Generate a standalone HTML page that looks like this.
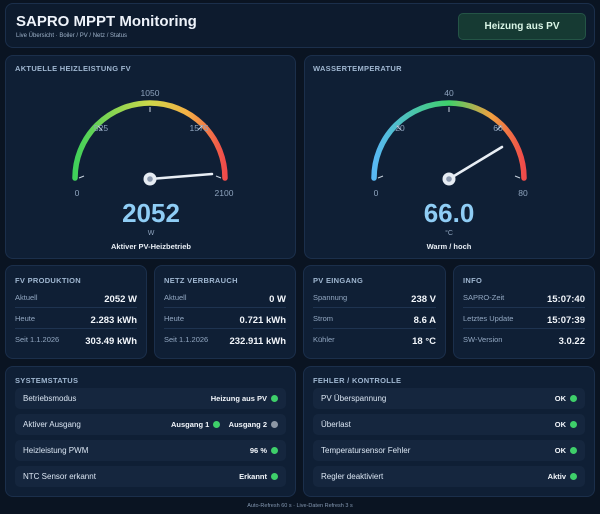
<!DOCTYPE html>
<html><head><meta charset="utf-8"><style>
*{box-sizing:border-box;margin:0;padding:0}
body{width:600px;height:514px;background:#0a1422;font-family:"Liberation Sans",sans-serif;color:#dbe6f3;position:relative;overflow:hidden}
.card{position:absolute;background:#0f1f35;border:1px solid #1b2f4b;border-radius:8px}
.t{position:absolute;font-size:7.5px;font-weight:bold;color:#9fb6d0;letter-spacing:.3px}
.row{position:absolute;left:9px;right:9px;height:21px;font-size:7.5px;color:#93a8c2}
.row .v{position:absolute;right:0;top:0;font-size:9.5px;font-weight:bold;color:#f2f6fb}
.sep{position:absolute;left:9px;right:9px;height:1px;background:#1e3350}
.srow{position:absolute;left:9px;right:9px;height:21px;background:#15263e;border-radius:5px;font-size:8px;color:#dbe6f3}
.srow span.l{position:absolute;left:8px;top:6px}
.srow .r{position:absolute;right:8px;top:6px;font-weight:bold;font-size:7.5px;color:#f2f6fb}
.dot{display:inline-block;width:7px;height:7px;border-radius:50%;background:#3ecf6a;vertical-align:-1px;margin-left:4px}
.g{background:#8d97a5}
</style></head><body>
<div class="card" style="left:5px;top:3px;width:590px;height:45px;background:#0d1b2e">
<div style="position:absolute;left:10px;top:9px;font-size:15px;font-weight:bold;color:#eef3fa">SAPRO MPPT Monitoring</div>
<div style="position:absolute;left:10px;top:29px;font-size:6px;color:#9fb3ca">Live Übersicht · Boiler / PV / Netz / Status</div>
<div style="position:absolute;left:452px;top:9px;width:128px;height:27px;background:#163a33;border:1px solid #245446;border-radius:5px;text-align:center;line-height:26px;font-size:10px;font-weight:bold;color:#d9f5e6">Heizung aus PV</div>
</div>

<div class="card" style="left:5px;top:55px;width:291px;height:204px"><div class="t" style="left:9px;top:8px">AKTUELLE HEIZLEISTUNG FV</div></div>
<div class="card" style="left:304px;top:55px;width:291px;height:204px"><div class="t" style="left:8px;top:8px">WASSERTEMPERATUR</div></div>

<svg style="position:absolute;left:0;top:0" width="600" height="260">
<defs>
<linearGradient id="ga" x1="75" y1="0" x2="225" y2="0" gradientUnits="userSpaceOnUse"><stop offset="0" stop-color="#3fd15a"/><stop offset=".5" stop-color="#cfd84a"/><stop offset=".75" stop-color="#f5b045"/><stop offset="1" stop-color="#f04a4a"/></linearGradient>
<linearGradient id="gb" x1="374" y1="0" x2="524" y2="0" gradientUnits="userSpaceOnUse"><stop offset="0" stop-color="#58b8f5"/><stop offset=".5" stop-color="#3fd06a"/><stop offset=".78" stop-color="#f0a040"/><stop offset="1" stop-color="#f04a4a"/></linearGradient>
</defs>
<g font-size="8.5" fill="#8ea3bd" text-anchor="middle" font-family="Liberation Sans">
<path d="M75 178 A75 75 0 0 1 225 178" fill="none" stroke="url(#ga)" stroke-width="5.5" stroke-linecap="round"/>
<g stroke="#c8d2de" stroke-width="1"><line x1="150" y1="107" x2="150" y2="112"/><line x1="98" y1="126" x2="102" y2="130"/><line x1="202" y1="126" x2="198" y2="130"/><line x1="79" y1="178" x2="84" y2="176"/><line x1="221" y1="178" x2="216" y2="176"/></g>
<text x="150" y="96">1050</text><text x="101" y="131">525</text><text x="199" y="131">1575</text><text x="77" y="196">0</text><text x="224" y="196">2100</text>
<line x1="150" y1="179" x2="212" y2="174" stroke="#e8eef5" stroke-width="2.5" stroke-linecap="round"/>
<circle cx="150" cy="179" r="6.5" fill="#e6ecf3"/><circle cx="150" cy="179" r="2.8" fill="#8d9ab0"/>
<path d="M374 178 A75 75 0 0 1 524 178" fill="none" stroke="url(#gb)" stroke-width="5.5" stroke-linecap="round"/>
<g stroke="#c8d2de" stroke-width="1"><line x1="449" y1="107" x2="449" y2="112"/><line x1="397" y1="126" x2="401" y2="130"/><line x1="501" y1="126" x2="497" y2="130"/><line x1="378" y1="178" x2="383" y2="176"/><line x1="520" y1="178" x2="515" y2="176"/></g>
<text x="449" y="96">40</text><text x="400" y="131">20</text><text x="498" y="131">60</text><text x="376" y="196">0</text><text x="523" y="196">80</text>
<line x1="449" y1="179" x2="502" y2="147" stroke="#e8eef5" stroke-width="2.5" stroke-linecap="round"/>
<circle cx="449" cy="179" r="6.5" fill="#e6ecf3"/><circle cx="449" cy="179" r="2.8" fill="#8d9ab0"/>
</g>
<g text-anchor="middle" font-family="Liberation Sans">
<text x="151" y="222" font-size="26" font-weight="bold" fill="#8fcdf5">2052</text>
<text x="151" y="235" font-size="7" fill="#8ea3bd">W</text>
<text x="151" y="249" font-size="7.5" font-weight="bold" fill="#e8eef5">Aktiver PV-Heizbetrieb</text>
<text x="449" y="222" font-size="26" font-weight="bold" fill="#8fcdf5">66.0</text>
<text x="449" y="235" font-size="7" fill="#8ea3bd">°C</text>
<text x="449" y="249" font-size="7.5" font-weight="bold" fill="#e8eef5">Warm / hoch</text>
</g>
</svg>

<div class="card" style="left:5px;top:265px;width:142px;height:94px"><div class="t" style="left:9px;top:10px">FV PRODUKTION</div>
<div class="row" style="top:27px">Aktuell<span class="v" style="top:1px">2052 W</span></div><div class="sep" style="top:41px"></div>
<div class="row" style="top:48px">Heute<span class="v" style="top:1px">2.283 kWh</span></div><div class="sep" style="top:62px"></div>
<div class="row" style="top:69px">Seit 1.1.2026<span class="v" style="top:1px">303.49 kWh</span></div></div>
<div class="card" style="left:154px;top:265px;width:142px;height:94px"><div class="t" style="left:9px;top:10px">NETZ VERBRAUCH</div>
<div class="row" style="top:27px">Aktuell<span class="v" style="top:1px">0 W</span></div><div class="sep" style="top:41px"></div>
<div class="row" style="top:48px">Heute<span class="v" style="top:1px">0.721 kWh</span></div><div class="sep" style="top:62px"></div>
<div class="row" style="top:69px">Seit 1.1.2026<span class="v" style="top:1px">232.911 kWh</span></div></div>
<div class="card" style="left:303px;top:265px;width:143px;height:94px"><div class="t" style="left:9px;top:10px">PV EINGANG</div>
<div class="row" style="top:27px">Spannung<span class="v" style="top:1px">238 V</span></div><div class="sep" style="top:41px"></div>
<div class="row" style="top:48px">Strom<span class="v" style="top:1px">8.6 A</span></div><div class="sep" style="top:62px"></div>
<div class="row" style="top:69px">Kühler<span class="v" style="top:1px">18 °C</span></div></div>
<div class="card" style="left:453px;top:265px;width:142px;height:94px"><div class="t" style="left:9px;top:10px">INFO</div>
<div class="row" style="top:27px">SAPRO-Zeit<span class="v" style="top:1px">15:07:40</span></div><div class="sep" style="top:41px"></div>
<div class="row" style="top:48px">Letztes Update<span class="v" style="top:1px">15:07:39</span></div><div class="sep" style="top:62px"></div>
<div class="row" style="top:69px">SW-Version<span class="v" style="top:1px">3.0.22</span></div></div>

<div class="card" style="left:5px;top:366px;width:291px;height:131px"><div class="t" style="left:9px;top:9px">SYSTEMSTATUS</div>
<div class="srow" style="top:21px"><span class="l">Betriebsmodus</span><span class="r">Heizung aus PV<i class="dot"></i></span></div>
<div class="srow" style="top:47px"><span class="l">Aktiver Ausgang</span><span class="r">Ausgang 1<i class="dot"></i>&nbsp;&nbsp;&nbsp;&nbsp;Ausgang 2<i class="dot g"></i></span></div>
<div class="srow" style="top:73px"><span class="l">Heizleistung PWM</span><span class="r">96 %<i class="dot"></i></span></div>
<div class="srow" style="top:99px"><span class="l">NTC Sensor erkannt</span><span class="r">Erkannt<i class="dot"></i></span></div></div>
<div class="card" style="left:303px;top:366px;width:292px;height:131px"><div class="t" style="left:9px;top:9px">FEHLER / KONTROLLE</div>
<div class="srow" style="top:21px"><span class="l">PV Überspannung</span><span class="r">OK<i class="dot"></i></span></div>
<div class="srow" style="top:47px"><span class="l">Überlast</span><span class="r">OK<i class="dot"></i></span></div>
<div class="srow" style="top:73px"><span class="l">Temperatursensor Fehler</span><span class="r">OK<i class="dot"></i></span></div>
<div class="srow" style="top:99px"><span class="l">Regler deaktiviert</span><span class="r">Aktiv<i class="dot"></i></span></div></div>

<div style="position:absolute;left:0;width:600px;top:503px;text-align:center;font-size:5.5px;color:#8397b0">Auto-Refresh 60 s · Live-Daten Refresh 3 s</div>
</body></html>
